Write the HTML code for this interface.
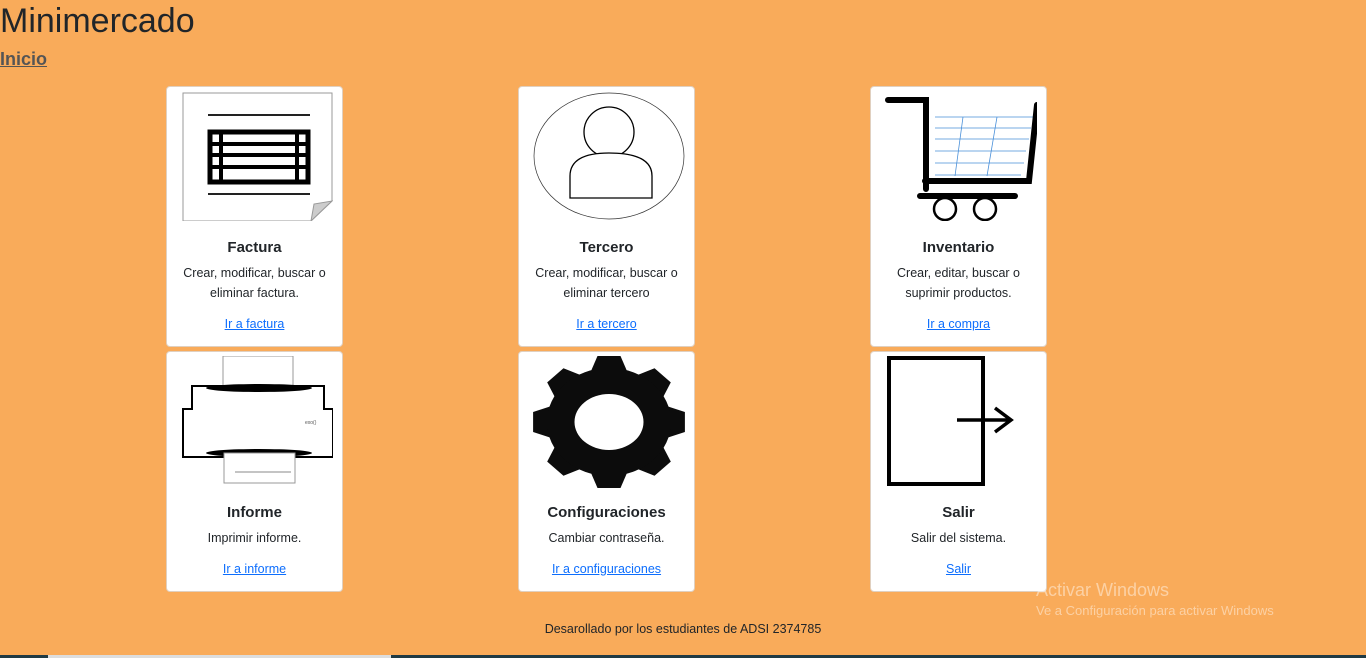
<!DOCTYPE html>
<html><head><meta charset="utf-8"><style>
body{margin:0;width:1366px;height:658px;background:#f9ab5a;font-family:"Liberation Sans",sans-serif;color:#212529;position:relative;overflow:hidden}
h1{position:absolute;left:0;top:2px;margin:0;font-size:34px;font-weight:500;line-height:38px}
.inicio{position:absolute;left:0;top:49px;font-size:18px;font-weight:bold;color:#555;text-decoration:underline}
.card{position:absolute;width:177px;background:#fff;border:1px solid #e0d0c0;border-radius:4px;box-sizing:border-box;text-align:center}
.card svg{position:absolute;left:14px;top:4px}
.t{position:absolute;left:0;right:0;font-size:15px;font-weight:bold}
.d{position:absolute;left:8px;right:8px;font-size:12.5px;line-height:20px}
.l{position:absolute;left:0;right:0;font-size:12.5px;color:#0d6efd;text-decoration:underline}
.foot{position:absolute;left:0;width:1366px;top:622px;text-align:center;font-size:12.5px}
.bar{position:absolute;left:0;top:655px;width:1366px;height:3px;background:#1f3a44}
.bar i{position:absolute;left:48px;width:343px;height:3px;background:#ddd}
.wm{position:absolute;left:1036px;top:580px;color:rgba(255,255,255,.45);font-size:18px}
.wm small{display:block;font-size:13px;margin-top:2px}
</style></head><body>
<h1>Minimercado</h1>
<div class="inicio">Inicio</div>

<div class="card" style="left:166px;top:86px;height:261px">
<svg width="152" height="130" viewBox="0 0 152 130"><path d="M2 2H151V110L130 130H2Z" fill="#fff" stroke="#999"/><path d="M151 110L130 130L133 113Z" fill="#ccc" stroke="#999"/>
<line x1="27" y1="24" x2="129" y2="24" stroke="#222" stroke-width="2"/><line x1="27" y1="103" x2="129" y2="103" stroke="#222" stroke-width="2"/>
<rect x="29" y="41" width="98" height="50" fill="none" stroke="#000" stroke-width="5"/>
<path d="M29 53H127M29 64H127M29 76H127M40 41V91M116 41V91" stroke="#000" stroke-width="4"/></svg>
<div class="t" style="top:152px">Factura</div>
<div class="d" style="top:176px">Crear, modificar, buscar o eliminar factura.</div>
<div class="l" style="top:230px">Ir a factura</div></div>

<div class="card" style="left:518px;top:86px;height:261px">
<svg width="152" height="130" viewBox="0 0 152 130"><ellipse cx="76" cy="65" rx="75" ry="63" fill="none" stroke="#333" stroke-width=".7"/>
<circle cx="76" cy="41" r="25" fill="#fff" stroke="#000" stroke-width="1.3"/>
<path d="M37 107V85Q37 62 76 62Q119 62 119 85V107Z" fill="#fff" stroke="#000" stroke-width="1.3"/></svg>
<div class="t" style="top:152px">Tercero</div>
<div class="d" style="top:176px">Crear, modificar, buscar o eliminar tercero</div>
<div class="l" style="top:230px">Ir a tercero</div></div>

<div class="card" style="left:870px;top:86px;height:261px">
<svg width="152" height="130" viewBox="0 0 152 130"><g stroke="#4a90d9" stroke-width=".8" fill="none"><path d="M50 26H148M50 37H146M50 48H144M50 60H141M50 72H139M50 84H136M78 26L70 85M112 26L102 85"/></g>
<path d="M3 9H41V98M40 90H144L152 14M35 105H130" stroke="#000" stroke-width="6" fill="none" stroke-linecap="round"/>
<circle cx="60" cy="118" r="11" fill="#fff" stroke="#000" stroke-width="2.5"/><circle cx="100" cy="118" r="11" fill="#fff" stroke="#000" stroke-width="2.5"/></svg>
<div class="t" style="top:152px">Inventario</div>
<div class="d" style="top:176px">Crear, editar, buscar o suprimir productos.</div>
<div class="l" style="top:230px">Ir a compra</div></div>

<div class="card" style="left:166px;top:351px;height:241px">
<svg width="152" height="130" viewBox="0 0 152 130"><rect x="42" y="0" width="70" height="30" fill="#fff" stroke="#999"/>
<path d="M2 101V53H11V30H143V53H152V101Z" fill="#fff" stroke="#000" stroke-width="2"/>
<ellipse cx="78" cy="32" rx="53" ry="4" fill="#000"/><ellipse cx="78" cy="97" rx="53" ry="4" fill="#000"/>
<rect x="43" y="97" width="71" height="30" fill="#fff" stroke="#999"/><line x1="54" y1="116" x2="110" y2="116" stroke="#888"/>
<text x="124" y="68" font-size="5" fill="#555">exo()</text></svg>
<div class="t" style="top:152px">Informe</div>
<div class="d" style="top:176px">Imprimir informe.</div>
<div class="l" style="top:210px">Ir a informe</div></div>

<div class="card" style="left:518px;top:351px;height:241px">
<svg width="152" height="132" viewBox="0 0 152 132"><g transform="translate(76,66) scale(1.15,1)">
<g fill="#0c0c0c"><path d="M-10 -66H10L16 -50H-16Z"/><path d="M-10 -66H10L16 -50H-16Z" transform="rotate(45)"/><path d="M-10 -66H10L16 -50H-16Z" transform="rotate(90)"/><path d="M-10 -66H10L16 -50H-16Z" transform="rotate(135)"/><path d="M-10 -66H10L16 -50H-16Z" transform="rotate(180)"/><path d="M-10 -66H10L16 -50H-16Z" transform="rotate(225)"/><path d="M-10 -66H10L16 -50H-16Z" transform="rotate(270)"/><path d="M-10 -66H10L16 -50H-16Z" transform="rotate(315)"/><circle r="54"/></g>
<ellipse rx="30" ry="28" fill="#fff"/></g></svg>
<div class="t" style="top:152px">Configuraciones</div>
<div class="d" style="top:176px">Cambiar contraseña.</div>
<div class="l" style="top:210px">Ir a configuraciones</div></div>

<div class="card" style="left:870px;top:351px;height:241px">
<svg width="152" height="130" viewBox="0 0 152 130"><rect x="4" y="2" width="94" height="126" fill="none" stroke="#000" stroke-width="4"/>
<path d="M72 64H126M110 52L126 64L110 76" stroke="#000" stroke-width="3.5" fill="none"/></svg>
<div class="t" style="top:152px">Salir</div>
<div class="d" style="top:176px">Salir del sistema.</div>
<div class="l" style="top:210px">Salir</div></div>

<div class="wm">Activar Windows<small>Ve a Configuración para activar Windows</small></div>
<div class="foot">Desarollado por los estudiantes de ADSI 2374785</div>
<div class="bar"><i></i></div>
</body></html>
